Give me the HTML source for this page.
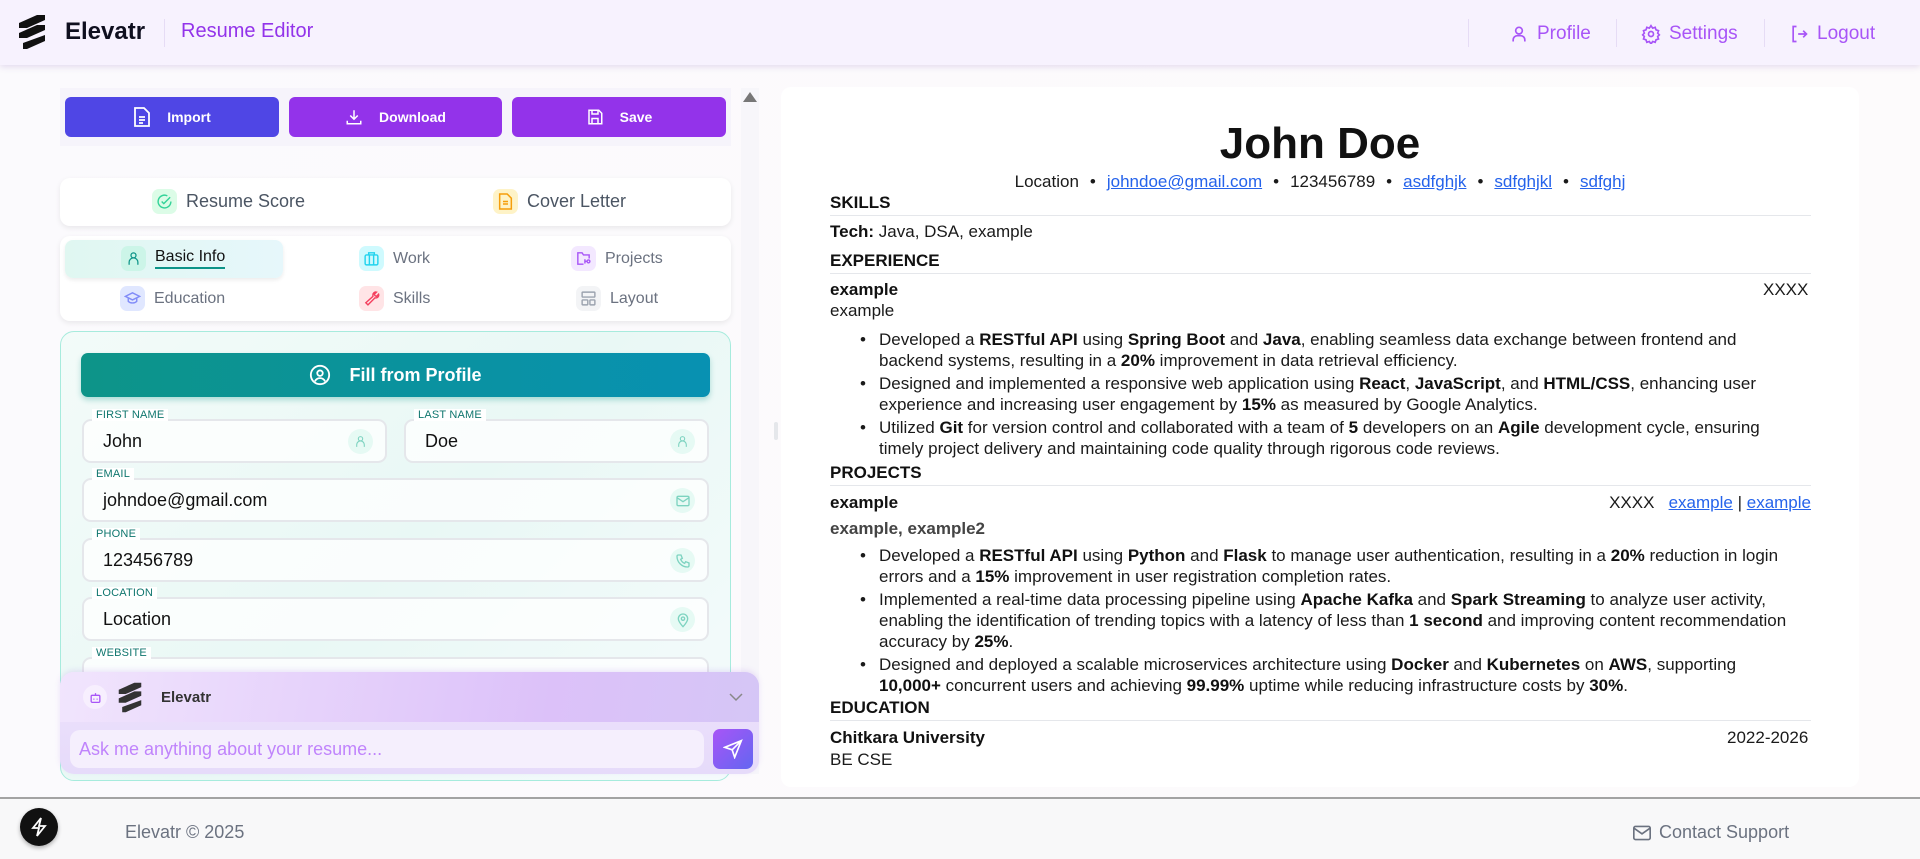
<!DOCTYPE html>
<html><head><meta charset="utf-8"><style>
*{box-sizing:border-box;margin:0;padding:0}
body{width:1920px;height:859px;overflow:hidden;font-family:"Liberation Sans",sans-serif;background:linear-gradient(90deg,#fbfafd,#fdfbfc);position:relative}
.abs{position:absolute}
.hdr{left:0;top:0;width:1920px;height:65px;background:#f7f2fe;box-shadow:0 2px 6px rgba(120,80,170,.18)}
.nav{color:#a855f7;font-size:19px;display:flex;align-items:center;gap:8px}
.vd{width:1px;height:28px;background:#e6dcf5;top:19px}
.btnbar{left:60px;top:88px;width:671px;height:58px;background:#f6f4fb}
.btn{top:97px;height:40px;border-radius:6px;color:#fff;font-size:14px;font-weight:bold;display:flex;align-items:center;justify-content:center;gap:16px}
.card{background:#fff;border-radius:10px;box-shadow:0 2px 6px rgba(0,0,0,.08)}
.ic{width:25px;height:25px;border-radius:7px;display:flex;align-items:center;justify-content:center}
.tab{font-size:16px;color:#6b7280;display:flex;align-items:center;gap:9px}
.lbl{font-size:11px;color:#0f766e;background:#fff;padding:0 4px;letter-spacing:.2px}
.inp{border:2px solid #e5e7eb;border-radius:9px;background:rgba(255,255,255,.75);height:44px;font-size:18px;color:#111;padding-left:19px;display:flex;align-items:center}
.iic{position:absolute;right:12px;top:8px;width:25px;height:25px;border-radius:50%;background:#e6faf4;display:flex;align-items:center;justify-content:center}
.r{font-size:17px;color:#1a1a1a;line-height:21px;white-space:nowrap}
.r b{color:#111}
.sec{font-weight:bold;font-size:17px;left:830px;width:981px;border-bottom:1px solid #e5e7eb;height:24px;color:#111}
a{color:#2563eb;text-decoration:underline}
ul{list-style:none}
li{position:relative;padding-left:49px}
li:before{content:"•";position:absolute;left:30px}
.sp{display:inline-block;width:11px}
</style></head><body>
<div class="abs hdr"></div>
<svg class="abs" style="left:17px;top:14px" width="30" height="36" viewBox="0 0 30 36"><path d="M20 1 L28 1 L28 6 L10 14 L2 14 L2 9Z M20 11 L28 11 L28 16 L10 24 L2 24 L2 19Z M28 21 L28 27 L10 35 L6 35 L6 29Z" fill="#111"/></svg>
<div class="abs" style="left:65px;top:18px;font-size:24px;font-weight:bold;color:#0f0f1f">Elevatr</div>
<div class="abs vd" style="left:164px"></div>
<div class="abs" style="left:181px;top:20px;font-size:20px;color:#9333ea">Resume Editor</div>
<div class="abs vd" style="left:1468px"></div>
<div class="abs vd" style="left:1616px"></div>
<div class="abs vd" style="left:1764px"></div>
<div class="abs nav" style="left:1509px;top:23px"><svg width="20" height="20" viewBox="0 0 24 24" fill="none" stroke="#a855f7" stroke-width="2"><circle cx="12" cy="8" r="4"/><path d="M5 21v-2a5 5 0 0 1 5-5h4a5 5 0 0 1 5 5v2"/></svg>Profile</div>
<div class="abs nav" style="left:1641px;top:23px"><svg width="20" height="20" viewBox="0 0 24 24" fill="none" stroke="#a855f7" stroke-width="2"><circle cx="12" cy="12" r="3"/><path d="M12 2l2 3 3-1 1 3 3 1-1 3 2 2-2 2 1 3-3 1-1 3-3-1-2 3-2-3-3 1-1-3-3-1 1-3-2-2 2-2-1-3 3-1 1-3 3 1z"/></svg>Settings</div>
<div class="abs nav" style="left:1789px;top:23px"><svg width="20" height="20" viewBox="0 0 24 24" fill="none" stroke="#a855f7" stroke-width="2"><path d="M9 3H5v18h4M11 12h10M17 8l4 4-4 4"/></svg>Logout</div>

<div class="abs btnbar"></div>
<div class="abs btn" style="left:65px;width:214px;background:#4f46e5"><svg width="18" height="20" viewBox="0 0 18 20" fill="none" stroke="#fff" stroke-width="1.8"><path d="M2 1h9l5 5v13H2z M6 10h6M6 13h6M6 16h4"/></svg>Import</div>
<div class="abs btn" style="left:289px;width:213px;background:#9333ea"><svg width="18" height="18" viewBox="0 0 24 24" fill="none" stroke="#fff" stroke-width="2"><path d="M12 3v12M7 10l5 5 5-5M3 17v4h18v-4"/></svg>Download</div>
<div class="abs btn" style="left:512px;width:214px;background:#9333ea"><svg width="18" height="18" viewBox="0 0 24 24" fill="none" stroke="#fff" stroke-width="2"><path d="M4 3h13l4 4v14H4z M8 3v5h8V3 M8 21v-7h8v7"/></svg>Save</div>
<div class="abs" style="left:741px;top:88px;width:18px;height:686px;background:#f7f6fa"></div>
<div class="abs" style="left:743px;top:92px;width:0;height:0;border-left:7px solid transparent;border-right:7px solid transparent;border-bottom:10px solid #777"></div>

<div class="abs card" style="left:60px;top:178px;width:671px;height:48px"></div>
<div class="abs tab" style="left:152px;top:189px;font-size:18px;color:#4b5563"><div class="ic" style="background:#dcfce7"><svg width="17" height="17" viewBox="0 0 24 24" fill="none" stroke="#34d399" stroke-width="2"><path d="M21 12a9 9 0 1 1-5-8M8 12l3 3 9-9"/></svg></div>Resume Score</div>
<div class="abs tab" style="left:493px;top:189px;font-size:18px;color:#4b5563"><div class="ic" style="background:#fef3c7"><svg width="15" height="17" viewBox="0 0 18 20" fill="none" stroke="#f59e0b" stroke-width="1.8"><path d="M2 1h9l5 5v13H2z M6 10h6M6 13h6"/></svg></div>Cover Letter</div>

<div class="abs card" style="left:60px;top:236px;width:671px;height:85px"></div>
<div class="abs" style="left:65px;top:240px;width:218px;height:38px;border-radius:8px;background:linear-gradient(90deg,#e0f7f1,#e6f7fb);box-shadow:0 2px 4px rgba(0,0,0,.08)"></div>
<div class="abs tab" style="left:121px;top:246px;color:#111"><div class="ic" style="background:#ccf5e8"><svg width="15" height="17" viewBox="0 0 24 24" fill="none" stroke="#0d9488" stroke-width="2"><circle cx="12" cy="7" r="4"/><path d="M5 22v-4a5 5 0 0 1 14 0v4"/></svg></div><span style="border-bottom:2px solid #0d9488;padding-bottom:1px">Basic Info</span></div>
<div class="abs tab" style="left:359px;top:246px"><div class="ic" style="background:#cffafe"><svg width="17" height="17" viewBox="0 0 24 24" fill="none" stroke="#22d3ee" stroke-width="2"><rect x="3" y="7" width="18" height="14" rx="2"/><path d="M8 7V4h8v3M9 7v14M15 7v14"/></svg></div>Work</div>
<div class="abs tab" style="left:571px;top:246px"><div class="ic" style="background:#f3e8ff"><svg width="17" height="17" viewBox="0 0 24 24" fill="none" stroke="#a855f7" stroke-width="2"><path d="M12 20H4V4h6l2 3h8v5 M14 13v6M14 16h3a2 2 0 1 1 0 .1"/></svg></div>Projects</div>
<div class="abs tab" style="left:120px;top:286px"><div class="ic" style="background:#e0e7ff"><svg width="17" height="17" viewBox="0 0 24 24" fill="none" stroke="#818cf8" stroke-width="2"><path d="M2 9l10-5 10 5-10 5z M6 11v5c3 3 9 3 12 0v-5"/></svg></div>Education</div>
<div class="abs tab" style="left:359px;top:286px"><div class="ic" style="background:#ffe4e6"><svg width="17" height="17" viewBox="0 0 24 24" fill="none" stroke="#f43f5e" stroke-width="2"><path d="M14 7a4 4 0 0 1 5-4l-3 3 1 2 2 1 3-3a4 4 0 0 1-5 5L7 21l-3-3 10-9z"/></svg></div>Skills</div>
<div class="abs tab" style="left:576px;top:286px"><div class="ic" style="background:#f3f4f6"><svg width="17" height="17" viewBox="0 0 24 24" fill="none" stroke="#9ca3af" stroke-width="2"><rect x="3" y="3" width="18" height="7" rx="1"/><rect x="3" y="14" width="8" height="7" rx="1"/><rect x="14" y="14" width="7" height="7" rx="1"/></svg></div>Layout</div>

<div class="abs" style="left:60px;top:331px;width:671px;height:450px;border:1.5px solid #a7ebdd;border-radius:14px;background:linear-gradient(135deg,#f3fbf9,#e9f8f5 50%,#f5fbfc)"></div>
<div class="abs" style="left:81px;top:353px;width:629px;height:44px;border-radius:7px;background:linear-gradient(90deg,#0d9488,#0891b2);box-shadow:0 3px 6px rgba(13,148,136,.3);color:#fff;font-size:18px;font-weight:bold;display:flex;align-items:center;justify-content:center;gap:18px"><svg width="22" height="22" viewBox="0 0 24 24" fill="none" stroke="#fff" stroke-width="2"><circle cx="12" cy="12" r="10"/><circle cx="12" cy="10" r="3"/><path d="M6.5 19a6 6 0 0 1 11 0"/></svg>Fill from Profile</div>

<div class="abs inp" style="left:82px;top:419px;width:305px">John<div class="iic"><svg width="13" height="15" viewBox="0 0 24 24" fill="none" stroke="#7dd3c0" stroke-width="2"><circle cx="12" cy="7" r="4"/><path d="M5 22v-4a5 5 0 0 1 14 0v4"/></svg></div></div>
<div class="abs lbl" style="left:92px;top:409px">FIRST NAME</div>
<div class="abs inp" style="left:404px;top:419px;width:305px">Doe<div class="iic"><svg width="13" height="15" viewBox="0 0 24 24" fill="none" stroke="#7dd3c0" stroke-width="2"><circle cx="12" cy="7" r="4"/><path d="M5 22v-4a5 5 0 0 1 14 0v4"/></svg></div></div>
<div class="abs lbl" style="left:414px;top:409px">LAST NAME</div>
<div class="abs inp" style="left:82px;top:478px;width:627px">johndoe@gmail.com<div class="iic"><svg width="16" height="16" viewBox="0 0 24 24" fill="none" stroke="#7dd3c0" stroke-width="2"><rect x="3" y="5" width="18" height="14" rx="2"/><path d="M3 7l9 6 9-6"/></svg></div></div>
<div class="abs lbl" style="left:92px;top:468px">EMAIL</div>
<div class="abs inp" style="left:82px;top:538px;width:627px">123456789<div class="iic"><svg width="16" height="16" viewBox="0 0 24 24" fill="none" stroke="#7dd3c0" stroke-width="2"><path d="M5 3h4l2 5-2.5 1.5a11 11 0 0 0 6 6L16 13l5 2v4a2 2 0 0 1-2 2A16 16 0 0 1 3 5a2 2 0 0 1 2-2"/></svg></div></div>
<div class="abs lbl" style="left:92px;top:528px">PHONE</div>
<div class="abs inp" style="left:82px;top:597px;width:627px">Location<div class="iic"><svg width="16" height="16" viewBox="0 0 24 24" fill="none" stroke="#7dd3c0" stroke-width="2"><path d="M12 22s7-7 7-12a7 7 0 0 0-14 0c0 5 7 12 7 12z"/><circle cx="12" cy="10" r="2.5"/></svg></div></div>
<div class="abs lbl" style="left:92px;top:587px">LOCATION</div>
<div class="abs inp" style="left:82px;top:657px;width:627px"></div>
<div class="abs lbl" style="left:92px;top:647px">WEBSITE</div>

<div class="abs" style="left:60px;top:672px;width:699px;height:102px;border-radius:14px;background:linear-gradient(180deg,#ede1fc,#e6dbfa);box-shadow:0 -2px 6px rgba(150,90,220,.15);overflow:hidden">
 <div style="height:50px;background:linear-gradient(100deg,#f1e5fd,#dcc1f9 70%,#d5c6f6);position:relative"></div>
</div>
<div class="abs" style="left:83px;top:685px;width:24px;height:24px;border-radius:50%;background:#f7effe;display:flex;align-items:center;justify-content:center"><svg width="13" height="13" viewBox="0 0 24 24" fill="none" stroke="#a855f7" stroke-width="2.4"><rect x="4" y="8" width="16" height="13" rx="2"/><path d="M12 8V4M9 14v2M15 14v2"/></svg></div>
<svg class="abs" style="left:117px;top:681px" width="26" height="33" viewBox="0 0 30 36"><path d="M20 1 L28 1 L28 6 L10 14 L2 14 L2 9Z M20 11 L28 11 L28 16 L10 24 L2 24 L2 19Z M28 21 L28 27 L10 35 L6 35 L6 29Z" fill="#333"/></svg>
<div class="abs" style="left:161px;top:689px;font-size:15px;font-weight:bold;color:#333">Elevatr</div>
<svg class="abs" style="left:728px;top:691px" width="16" height="12" viewBox="0 0 16 12" fill="none" stroke="#888" stroke-width="1.5"><path d="M2 3l6 6 6-6"/></svg>
<div class="abs" style="left:70px;top:730px;width:634px;height:38px;border-radius:10px;background:#f5effd;font-size:18px;color:#c084fc;padding-left:9px;display:flex;align-items:center">Ask me anything about your resume...</div>
<div class="abs" style="left:713px;top:729px;width:40px;height:40px;border-radius:7px;background:linear-gradient(135deg,#a855f7,#6366f1);display:flex;align-items:center;justify-content:center"><svg width="20" height="20" viewBox="0 0 24 24" fill="none" stroke="#fff" stroke-width="2"><path d="M22 2L2 10l9 3 3 9z M11 13l11-11"/></svg></div>
<div class="abs" style="left:774px;top:422px;width:4px;height:18px;border-radius:2px;background:#e5e7eb"></div>

<div class="abs" style="left:781px;top:87px;width:1078px;height:700px;background:#fff;border-radius:10px"></div>
<div class="abs" style="left:0;top:797px;width:1920px;height:62px;background:#f8f8f9;border-top:2px solid #a3a3a3"></div>
<div class="abs" style="left:20px;top:808px;width:38px;height:38px;border-radius:50%;background:#111;display:flex;align-items:center;justify-content:center;box-shadow:0 2px 4px rgba(0,0,0,.3)"><svg width="16" height="20" viewBox="0 0 16 20" fill="none" stroke="#fff" stroke-width="1.8"><path d="M10 1L2 11h6l-2 8 8-10H8z"/></svg></div>
<div class="abs" style="left:125px;top:822px;font-size:18px;color:#6b7280">Elevatr © 2025</div>
<div class="abs" style="left:1632px;top:822px;font-size:18px;color:#6b7280;display:flex;align-items:center;gap:7px"><svg width="20" height="18" viewBox="0 0 24 22" fill="none" stroke="#6b7280" stroke-width="2"><rect x="2" y="3" width="20" height="16" rx="2"/><path d="M2 5l10 7 10-7"/></svg>Contact Support</div>

<div class="abs" style="left:781px;width:1078px;top:119px;text-align:center;font-size:44px;font-weight:bold;color:#111;line-height:50px">John Doe</div>
<div class="abs r" style="left:781px;width:1078px;top:171px;text-align:center">Location<span class="sp"></span>•<span class="sp"></span><a>johndoe@gmail.com</a><span class="sp"></span>•<span class="sp"></span>123456789<span class="sp"></span>•<span class="sp"></span><a>asdfghjk</a><span class="sp"></span>•<span class="sp"></span><a>sdfghjkl</a><span class="sp"></span>•<span class="sp"></span><a>sdfghj</a></div>
<div class="abs r sec" style="top:192px">SKILLS</div>
<div class="abs r" style="left:830px;top:221px"><b>Tech:</b> Java, DSA, example</div>
<div class="abs r sec" style="top:250px">EXPERIENCE</div>
<div class="abs r" style="left:830px;top:279px"><b>example</b></div>
<div class="abs r" style="left:1763px;top:279px">XXXX</div>
<div class="abs r" style="left:830px;top:300px">example</div>
<ul class="abs r" style="left:830px;top:329px">
<li>Developed a <b>RESTful API</b> using <b>Spring Boot</b> and <b>Java</b>, enabling seamless data exchange between frontend and<br>backend systems, resulting in a <b>20%</b> improvement in data retrieval efficiency.</li>
<li style="margin-top:2px">Designed and implemented a responsive web application using <b>React</b>, <b>JavaScript</b>, and <b>HTML/CSS</b>, enhancing user<br>experience and increasing user engagement by <b>15%</b> as measured by Google Analytics.</li>
<li style="margin-top:2px">Utilized <b>Git</b> for version control and collaborated with a team of <b>5</b> developers on an <b>Agile</b> development cycle, ensuring<br>timely project delivery and maintaining code quality through rigorous code reviews.</li>
</ul>
<div class="abs r sec" style="top:462px">PROJECTS</div>
<div class="abs r" style="left:830px;top:492px"><b>example</b></div>
<div class="abs r" style="right:109px;top:492px">XXXX &nbsp;&nbsp;<a>example</a> | <a>example</a></div>
<div class="abs r" style="left:830px;top:518px;color:#444"><b style="color:#444">example, example2</b></div>
<ul class="abs r" style="left:830px;top:545px">
<li>Developed a <b>RESTful API</b> using <b>Python</b> and <b>Flask</b> to manage user authentication, resulting in a <b>20%</b> reduction in login<br>errors and a <b>15%</b> improvement in user registration completion rates.</li>
<li style="margin-top:2px">Implemented a real-time data processing pipeline using <b>Apache Kafka</b> and <b>Spark Streaming</b> to analyze user activity,<br>enabling the identification of trending topics with a latency of less than <b>1 second</b> and improving content recommendation<br>accuracy by <b>25%</b>.</li>
<li style="margin-top:2px">Designed and deployed a scalable microservices architecture using <b>Docker</b> and <b>Kubernetes</b> on <b>AWS</b>, supporting<br><b>10,000+</b> concurrent users and achieving <b>99.99%</b> uptime while reducing infrastructure costs by <b>30%</b>.</li>
</ul>
<div class="abs r sec" style="top:697px">EDUCATION</div>
<div class="abs r" style="left:830px;top:727px"><b>Chitkara University</b></div>
<div class="abs r" style="left:1727px;top:727px">2022-2026</div>
<div class="abs r" style="left:830px;top:749px">BE CSE</div>
</body></html>
